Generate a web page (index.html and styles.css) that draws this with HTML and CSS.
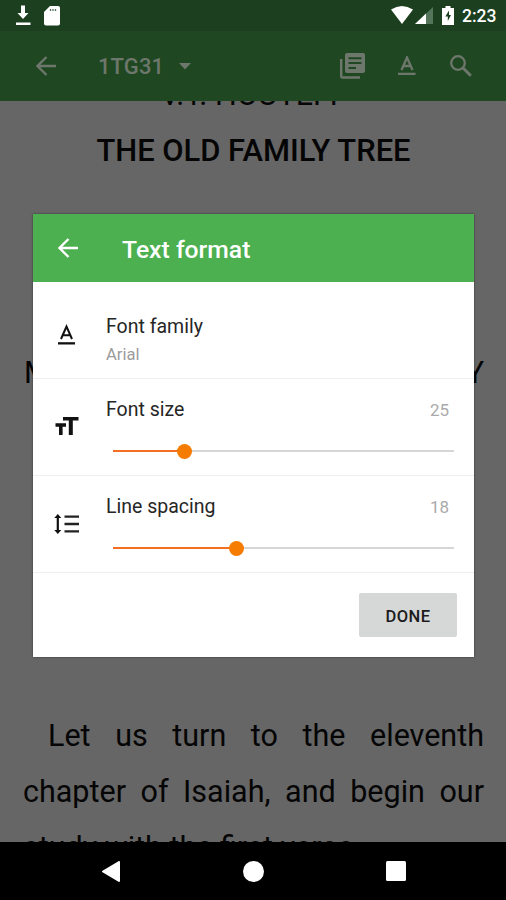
FILE: index.html
```html
<!DOCTYPE html>
<html lang="en">
<head>
<meta charset="utf-8">
<title>Text format</title>
<link rel="stylesheet" href="styles.css">
</head>
<body>
<div class="screen">
  <header class="status">
    <svg class="download" width="16" height="21" viewBox="0 0 16 21"><path d="M6 .5h4V8h3.500L8 14 2.500 8H6zM1 17.500h14.500V20H1z" fill="#fff"/></svg>
    <svg class="sd" width="16" height="20" viewBox="0 0 16 20"><path d="M6 0h8q2 0 2 2v15.500q0 2-2 2H2q-2 0-2-2V6z" fill="#fff"/><path d="M6.500 3.200v1.500M9 3.200v1.500M11.500 3.200v1.500" stroke="#1c401f" stroke-width="1.300"/></svg>
    <span class="grow"></span>
    <svg class="wifi" width="22" height="18" viewBox="0 0 22 18"><path d="M0 3.500Q11-3.500 22 3.500L11 18z" fill="#fff"/></svg>
    <svg class="signal" width="18" height="17" viewBox="0 0 18 17"><path d="M18 0v17H0z" fill="#54755a"/><path d="M11 6.600V17H0z" fill="#fff"/></svg>
    <svg class="battery" width="12" height="19" viewBox="0 0 12 19"><path d="M3.500 0h5v2H12v17H0V2h3.500z" fill="#fff"/><path d="M7 4.500 3.300 10.500h2.500v4.500L9 9H7z" fill="#1c401f"/></svg>
    <span class="clock">2:23</span>
  </header>
  <nav class="toolbar">
    <svg class="back" width="20" height="20" viewBox="0 0 20 20"><path d="M20 10H2M10.500 1 1.500 10l9 9" fill="none" stroke="currentColor" stroke-width="2.300"/></svg>
    <span class="book">1TG31</span>
    <svg class="caret" width="12" height="7" viewBox="0 0 12 7"><path d="M0 0h12L6 6.500z" fill="currentColor"/></svg>
    <span class="grow"></span>
    <svg class="library" width="26" height="26" viewBox="0 0 26 26"><path d="M1.200 6v17q0 1.500 1.500 1.500H20" fill="none" stroke="currentColor" stroke-width="2.400"/><rect x="5" width="20" height="20" rx="2" fill="currentColor"/><path d="M8.500 5.200h13M8.500 10h13M8.500 15h7.500" stroke="#1f4721" stroke-width="2"/></svg>
    <svg class="format" width="18" height="20" viewBox="0 0 18 20"><path d="M3.500 14 9 1.500l5.500 12.500M5.600 10h6.800" fill="none" stroke="currentColor" stroke-width="2.300"/><path d="M0 16.700h17.500V19H0z" fill="currentColor"/></svg>
    <svg class="search" width="22" height="22" viewBox="0 0 22 22" fill="none" stroke="currentColor"><circle cx="8" cy="8" r="6.800" stroke-width="2.300"/><path d="m12.800 12.800 8 8" stroke-width="3"/></svg>
  </nav>
  <main class="reader">
    <p class="line author">V.T. HOUTEFF</p>
    <h1 class="line title">THE OLD FAMILY TREE</h1>
    <p class="line place"><span>M</span><span>Y</span></p>
    <p class="line body first">Let us turn to the eleventh</p>
    <p class="line body">chapter of Isaiah, and begin our</p>
    <p class="line body last">study with the first verse.</p>
  </main>
  <footer class="navbar">
    <svg width="18" height="21" viewBox="0 0 18 21"><path d="M17 1v19L1 10.500z" fill="#fff" stroke="#fff" stroke-width="2" stroke-linejoin="round"/></svg>
    <svg width="21" height="21" viewBox="0 0 21 21"><circle cx="10.500" cy="10.500" r="10.500" fill="#fff"/></svg>
    <svg width="20" height="20" viewBox="0 0 20 20"><rect width="20" height="20" rx="1.500" fill="#fff"/></svg>
  </footer>

  <section class="dialog">
    <header class="dialog-head">
      <svg width="20" height="20" viewBox="0 0 20 20"><path d="M20 10H2M10.500 1 1.500 10l9 9" fill="none" stroke="#fff" stroke-width="2.300"/></svg>
      <h2>Text format</h2>
    </header>
    <div class="row family">
      <svg class="icon" width="26" height="26" viewBox="0 0 26 26"><path d="M8 17 13.500 4.500 19 17M10 13.300h7" fill="none" stroke="#111" stroke-width="2"/><path d="M5 20.200h17v2.300H5z" fill="#111"/></svg>
      <div class="label"><span>Font family</span><small>Arial</small></div>
    </div>
    <div class="row">
      <svg class="icon" width="26" height="26" viewBox="0 0 26 26"><path d="M10 3h15.500v3.600h-5.700V21h-4V6.600H10zM2.500 9.300H13v3.400H9.600V21H6v-8.300H2.500z" fill="#111"/></svg>
      <div class="field">
        <div class="caption"><span>Font size</span><b>25</b></div>
        <div class="slider"><i class="fill" style="width:71px"></i><i class="thumb"></i></div>
      </div>
    </div>
    <div class="row">
      <svg class="icon" width="26" height="26" viewBox="0 0 26 26"><path d="M4.800 6v14" stroke="#111" stroke-width="2.200"/><path d="m4.800 3 3.500 4h-7zM4.800 23l3.500-4h-7z" fill="#111"/><path d="M11.500 5.700H26M11.500 13H26M11.500 20.300H26" stroke="#222" stroke-width="2.300"/></svg>
      <div class="field">
        <div class="caption"><span>Line spacing</span><b>18</b></div>
        <div class="slider"><i class="fill" style="width:123px"></i><i class="thumb"></i></div>
      </div>
    </div>
    <footer class="actions"><button class="done">DONE</button></footer>
  </section>
</div>
</body>
</html>
```
FILE: styles.css
```css
* { box-sizing: border-box; }
body { margin: 0; font-family: Roboto, "Liberation Sans", sans-serif; }
svg { display: block; flex: none; }
p, h1, h2 { margin: 0; }
.grow { flex: 1; }
.screen { position: relative; width: 506px; height: 900px; display: flex; flex-direction: column; overflow: hidden; background: #666; }
.status { height: 31px; background: #1c401f; display: flex; align-items: flex-start; padding: 5px 9px 0 15px; }
.sd { margin: 1px 0 0 13px; }
.wifi { margin-top: 1px; }
.signal { margin: 2px 0 0 2px; }
.battery { margin: 1px 0 0 9px; }
.clock { width: 35px; margin-left: 8px; color: #fff; font-size: 17.5px; line-height: 22px; font-weight: 500; white-space: nowrap; }
.toolbar { height: 70px; background: #1f4721; color: #6d776c; display: flex; align-items: center; padding: 0 34px 0 36px; flex: none; }
.book { width: 66px; margin-left: 42px; font-size: 22px; font-weight: 500; letter-spacing: .1px; white-space: nowrap; padding-top: 1px; }
.caret { margin-left: 15px; }
.format { margin-left: 32px; }
.search { margin-left: 34px; }
.reader { flex: 1; min-height: 0; overflow: hidden; padding: 0 22px 0 23px; color: #050505; }
.line { height: 56px; line-height: 56px; font-size: 30.5px; font-weight: 400; white-space: nowrap; }
.author { margin-top: -34px; text-align: center; }
.title { font-size: 30.9px; font-weight: 500; text-align: center; }
.place { margin-top: 166px; padding-left: 1px; display: flex; justify-content: space-between; }
.body { text-align: justify; text-align-last: justify; }
.first { margin-top: 307px; padding-left: 25px; }
.last { text-align-last: left; }
.navbar { height: 58px; background: #000; display: flex; align-items: center; justify-content: space-between; padding: 0 100px 0 102px; flex: none; }
.dialog { position: absolute; left: 33px; top: 214px; width: 441px; height: 443px; background: #fff; box-shadow: 0 0 2px rgba(0,0,0,.5); }
.dialog-head { height: 68px; background: #4caf50; display: flex; align-items: center; padding-left: 25px; color: #fff; }
.dialog-head h2 { margin-left: 44px; font-size: 24.7px; font-weight: 500; line-height: 30px; padding-top: 4px; white-space: nowrap; }
.row { display: flex; height: 97px; border-bottom: 1px solid #efefef; padding: 19px 0 0 20px; }
.icon { margin: 16px 27px 0 0; }
.family { padding-top: 33px; }
.family .icon { margin-top: 7px; }
.label { display: flex; flex-direction: column; white-space: nowrap; }
.label span, .caption span { font-size: 19.5px; line-height: 24px; color: #262626; }
.label small { font-size: 16.6px; line-height: 20px; color: #9b9b9b; margin-top: 6px; }
.field { flex: 1; }
.caption { display: flex; justify-content: space-between; padding-right: 25px; white-space: nowrap; }
.caption b { font-weight: 400; font-size: 17px; line-height: 24px; color: #aaa; }
.slider { height: 16px; margin: 21px 20px 0 7px; display: flex; align-items: center; background: linear-gradient(#d6d6d6, #d6d6d6) center / 100% 2px no-repeat; }
.fill { height: 2px; background: #f36f21; }
.thumb { width: 15px; height: 15px; border-radius: 50%; background: #f57c00; margin-left: -7.5px; }
.actions { display: flex; justify-content: flex-end; padding: 20px 17px; }
.done { width: 98px; height: 44px; border: 0; border-radius: 2px; background: #d6d7d7; color: #1b1b1b; font: 500 16.5px Roboto, sans-serif; letter-spacing: .4px; padding: 2px 0 0; }
```
